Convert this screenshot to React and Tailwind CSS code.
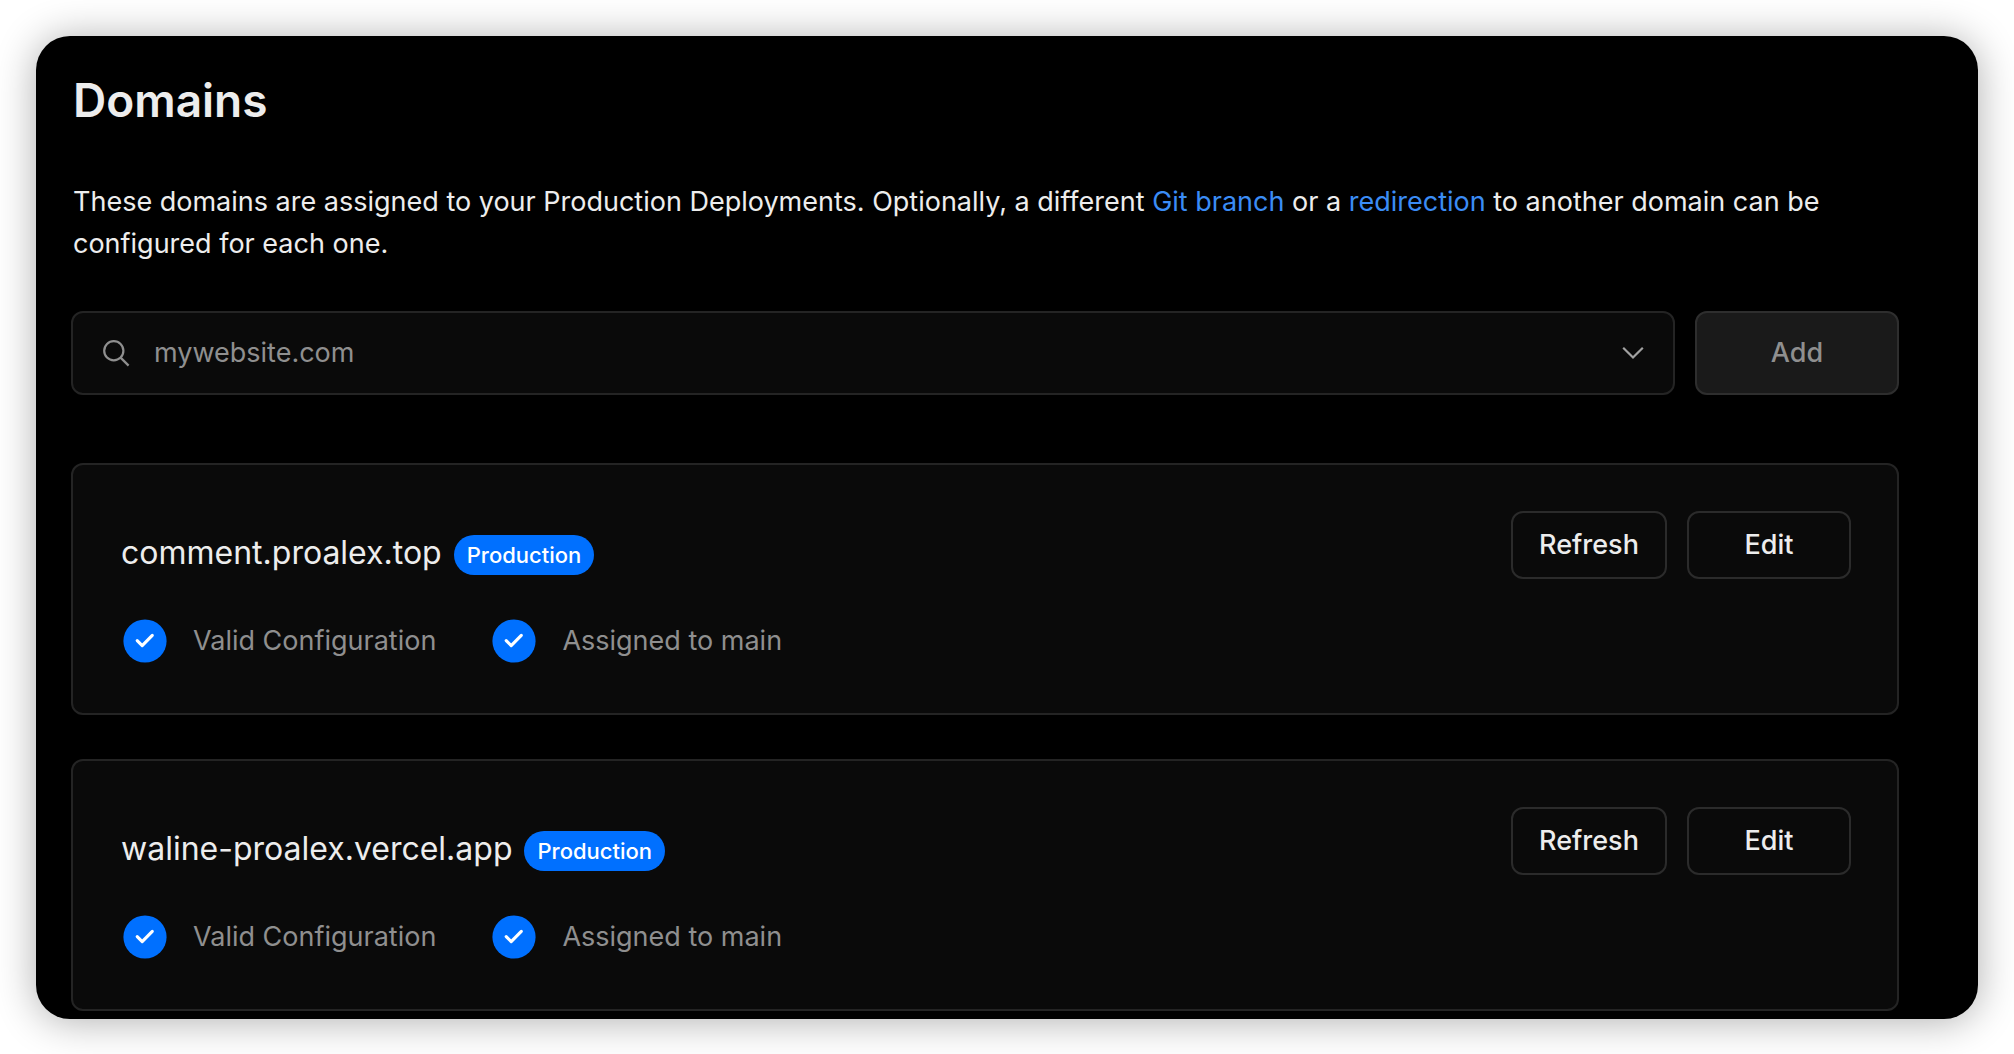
import React from "react";

const domains = ["comment.proalex.top", "waline-proalex.vercel.app"];

function SearchIcon() {
  return (
    <svg aria-hidden="true" className="size-7 shrink-0" viewBox="0 0 28 28" fill="none" stroke="#8f8f8f" strokeWidth="2.2">
      <circle cx="11.8" cy="11.8" r="9.6" />
      <path d="M18.6 18.6L26.6 26.6" />
    </svg>
  );
}

function ChevronIcon() {
  return (
    <svg aria-hidden="true" className="h-3.5 w-[22px]" viewBox="0 0 22 14" fill="none" stroke="#a1a1a1" strokeWidth="2.2">
      <path d="M1.2 1.7L11 11.5L20.8 1.7" />
    </svg>
  );
}

function Status({ children }) {
  return (
    <li className="flex items-center gap-[26px]">
      <svg aria-hidden="true" className="size-11 shrink-0" viewBox="0 0 44 44" fill="none">
        <circle cx="22" cy="22" r="21.6" fill="#0070ff" />
        <path d="M14.2 21.6L19.2 26.6L29.3 16.3" stroke="#fff" strokeWidth="3.1" strokeLinecap="round" strokeLinejoin="round" />
      </svg>
      <span>{children}</span>
    </li>
  );
}

function DomainCard({ name }) {
  const button =
    "h-[68px] rounded-xl border-2 border-[#2b2b2b] bg-[#0a0a0a] text-[27px] font-medium text-[#ededed]";
  return (
    <li className="flex items-start justify-between rounded-xl border-2 border-[#242424] bg-[#0a0a0a] pt-[46px] pr-[46px] pb-[50px] pl-12">
      <div className="pt-5">
        <div className="flex items-center gap-3">
          <h2 className="text-[32px] leading-[44px] text-[#ededed]">{name}</h2>
          <span className="mt-1 flex h-10 items-center rounded-full bg-[#0070ff] px-[13px] text-[22px] font-medium text-white">
            Production
          </span>
        </div>
        <ul className="mt-11 flex gap-14 pl-0.5 text-[27px] leading-[44px] text-[#8f8f8f]">
          <Status>Valid Configuration</Status>
          <Status>Assigned to main</Status>
        </ul>
      </div>
      <div className="flex gap-5">
        <button type="button" className={`${button} w-[156px]`}>
          Refresh
        </button>
        <button type="button" className={`${button} w-[164px]`}>
          Edit
        </button>
      </div>
    </li>
  );
}

export default function App() {
  return (
    <div className="min-h-screen bg-white p-9 font-['Inter',sans-serif]">
      <main className="rounded-[34px] bg-black pt-8 pr-[79px] pb-2 pl-[35px] shadow-[0_2px_40px_rgba(0,0,0,0.32)]">
        <h1 className="pl-0.5 text-[46px] leading-[64px] font-semibold text-[#ededed]">Domains</h1>
        <p className="mt-[49px] pl-0.5 text-[27px] leading-[42px] text-[#ededed]">
          These domains are assigned to your Production Deployments. Optionally, a different{" "}
          <a href="#git-branch" className="text-[#3b8cf5]">Git branch</a> or a{" "}
          <a href="#redirection" className="text-[#3b8cf5]">redirection</a> to another domain can be configured for each one.
        </p>
        <form className="mt-[46px] flex gap-5" onSubmit={(e) => e.preventDefault()}>
          <div className="flex h-[84px] flex-1 items-center rounded-xl border-2 border-[#242424] bg-[#0a0a0a] px-[29px]">
            <SearchIcon />
            <input
              type="text"
              aria-label="Domain"
              placeholder="mywebsite.com"
              className="ml-6 min-w-0 flex-1 bg-transparent text-[27px] text-[#ededed] outline-none placeholder:text-[#8f8f8f]"
            />
            <button type="button" aria-label="Show suggestions">
              <ChevronIcon />
            </button>
          </div>
          <button type="submit" className="w-[204px] rounded-xl border-2 border-[#2e2e2e] bg-[#1a1a1a] text-[27px] font-medium text-[#8f8f8f]">
            Add
          </button>
        </form>
        <ul className="mt-[68px] flex flex-col gap-11">
          {domains.map((name) => (
            <DomainCard key={name} name={name} />
          ))}
        </ul>
      </main>
    </div>
  );
}
